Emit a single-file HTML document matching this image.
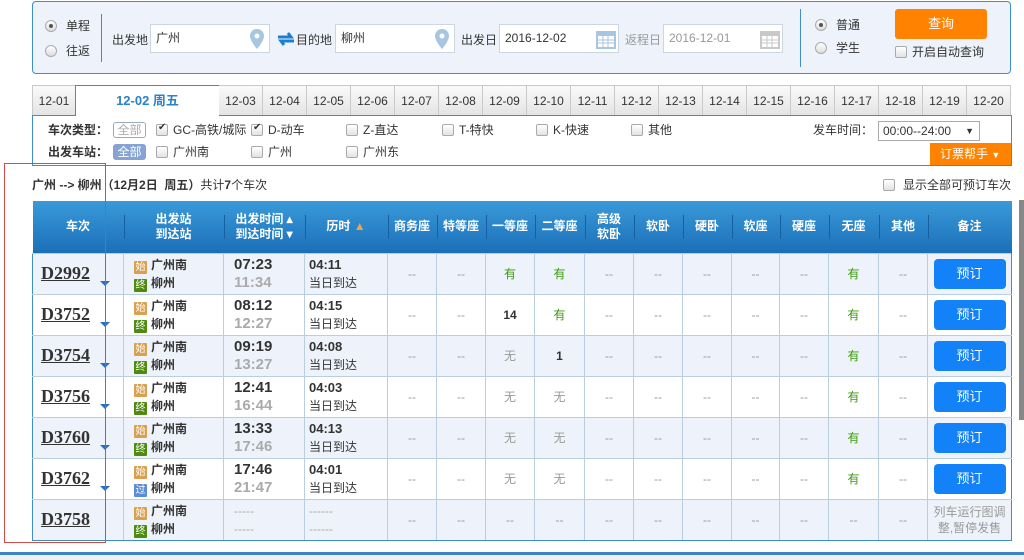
<!DOCTYPE html>
<html><head><meta charset="utf-8"><style>
*{margin:0;padding:0;box-sizing:border-box}
body{width:1024px;height:560px;overflow:hidden;background:#fff;font-family:"Liberation Sans","Noto Sans CJK SC",sans-serif;font-size:12px;color:#333;position:relative}
.a{position:absolute;white-space:nowrap}
.panel{left:32px;top:1px;width:979px;height:73px;background:#eef3fb;border:1px solid #3d8ec9;border-radius:4px}
.inp{position:absolute;height:29px;background:#fff;border:1px solid #ccd6e0;font-size:12px;line-height:27px;padding-left:5px;color:#333}
.rad{position:absolute;width:12px;height:12px;border-radius:50%;border:1px solid #aaa;background:linear-gradient(#fff,#ddd)}
.rad.on::after{content:"";position:absolute;left:3px;top:3px;width:4px;height:4px;border-radius:50%;background:#555}
.cb{position:absolute;width:12px;height:12px;border:1px solid #aaa;border-radius:2px;background:linear-gradient(#fff,#e2e2e2)}
.cb.on::after{content:"✔";position:absolute;left:1px;top:-3px;font-size:10px;color:#333}
.lbl{position:absolute;font-size:12px;line-height:16px}
.tab{position:absolute;top:85px;height:31px;width:44px;border:1px solid #c9c9c9;border-left:none;background:linear-gradient(#fafafa,#e4e4e4);font-size:12px;text-align:center;line-height:30px;color:#333}
table{position:absolute;left:32px;top:201px;border-collapse:collapse;table-layout:fixed;width:979px}
th{height:52px;background:linear-gradient(#3a9ad9,#1b6fb8);color:#fff;font-size:12px;font-weight:bold;line-height:15px;position:relative}
th+th::before{content:"";position:absolute;left:0;top:14px;height:24px;border-left:1px solid #17609f}
td{height:41px;border:1px solid #b9cfe0;text-align:center;font-size:12px;color:#999;position:relative}
tr:nth-child(even) td{background:#eef3fb}
tr:nth-child(odd) td{background:#fff}
td.n{text-align:left;padding-left:8px;border-left:1px solid #3d8ec9}
.tn{font-family:"Liberation Serif",serif;font-weight:bold;font-size:18px;color:#333;text-decoration:underline}
.tri{position:absolute;left:67px;top:27px;width:0;height:0;border-left:5px solid transparent;border-right:5px solid transparent;border-top:5px solid #2c6cc2}
td.s{text-align:left;padding-left:10px;color:#333;font-weight:bold;line-height:18px}
.ic{display:inline-block;width:13px;height:13px;font-size:10px;line-height:13px;text-align:center;color:#fff;margin-right:4px;vertical-align:-1px;font-weight:normal;border-radius:1px}
.st{background:#d9a050}.zh{background:#4f8a10}.gu{background:#5a8fd8}
td.t{text-align:left;padding-left:10px;line-height:18px}
.t1{font-weight:bold;font-size:15px;color:#333}.t2{font-weight:bold;font-size:15px;color:#aaa}
td.d{text-align:left;padding-left:4px;line-height:18px;color:#333}
.d1{font-weight:bold;font-size:13px}
.y{color:#3a9a0a}.k{color:#333;font-weight:bold}
.btn{display:block;margin:0 auto;width:72px;height:30px;background:#1382f8;border-radius:4px;color:#fff;line-height:30px;font-size:13px}
td.r{border-right:1px solid #3d8ec9}
tr:last-child td{border-bottom:1px solid #3d8ec9}
</style></head><body>

<div class="a panel"></div>
<div class="rad on" style="left:45px;top:20px"></div><div class="lbl" style="left:66px;top:18px">单程</div>
<div class="rad" style="left:45px;top:45px"></div><div class="lbl" style="left:66px;top:43px">往返</div>
<div class="a" style="left:101px;top:14px;height:48px;border-left:1px solid #3d8ec9"></div>
<div class="lbl" style="left:112px;top:32px">出发地</div>
<div class="inp" style="left:150px;top:24px;width:120px">广州</div>
<svg class="a" style="left:250px;top:29px" width="14" height="20" viewBox="0 0 14 20"><path d="M7 0C3 0 0 3 0 7c0 5 7 13 7 13s7-8 7-13C14 3 11 0 7 0z" fill="#a7c6e2"/><circle cx="7" cy="7" r="2.5" fill="#fff"/></svg>
<svg class="a" style="left:277px;top:32px" width="18" height="14" viewBox="0 0 18 14"><path d="M1 5h13l-3-4M17 9H4l3 4" stroke="#1a7fd0" stroke-width="3" fill="none"/></svg>
<div class="lbl" style="left:296px;top:32px">目的地</div>
<div class="inp" style="left:335px;top:24px;width:120px">柳州</div>
<svg class="a" style="left:435px;top:29px" width="14" height="20" viewBox="0 0 14 20"><path d="M7 0C3 0 0 3 0 7c0 5 7 13 7 13s7-8 7-13C14 3 11 0 7 0z" fill="#a7c6e2"/><circle cx="7" cy="7" r="2.5" fill="#fff"/></svg>
<div class="lbl" style="left:461px;top:32px">出发日</div>
<div class="inp" style="left:499px;top:24px;width:120px">2016-12-02</div>
<svg class="a" style="left:596px;top:29px" width="20" height="20" viewBox="0 0 20 20"><rect x="0" y="2" width="20" height="18" fill="#a7c6e2"/><rect x="2" y="7" width="16" height="11" fill="#fff"/><path d="M2 11h16M2 14h16M7 7v11M12 7v11" stroke="#a7c6e2"/></svg>
<div class="lbl" style="left:625px;top:32px;color:#999">返程日</div>
<div class="inp" style="left:663px;top:24px;width:120px;color:#999">2016-12-01</div>
<svg class="a" style="left:760px;top:29px" width="20" height="20" viewBox="0 0 20 20"><rect x="0" y="2" width="20" height="18" fill="#c8c8c8"/><rect x="2" y="7" width="16" height="11" fill="#fff"/><path d="M2 11h16M2 14h16M7 7v11M12 7v11" stroke="#c8c8c8"/></svg>
<div class="a" style="left:800px;top:9px;height:58px;border-left:1px solid #3d8ec9"></div>
<div class="rad on" style="left:815px;top:19px"></div><div class="lbl" style="left:836px;top:17px">普通</div>
<div class="rad" style="left:815px;top:42px"></div><div class="lbl" style="left:836px;top:40px">学生</div>
<div class="a" style="left:895px;top:9px;width:92px;height:30px;background:#ff8200;border-radius:3px;color:#fff;font-size:13px;text-align:center;line-height:30px">查询</div>
<div class="cb" style="left:895px;top:46px"></div><div class="lbl" style="left:912px;top:44px">开启自动查询</div>

<div class="tab" style="left:32px;width:44px;border-left:1px solid #c9c9c9">12-01</div>
<div class="a" style="left:75px;top:85px;width:145px;height:31px;background:#fff;border:1px solid #3d8ec9;border-bottom:none;color:#2a82c9;font-weight:bold;font-size:13px;text-align:center;line-height:29px">12-02 周五</div>
<div class="tab" style="left:219px">12-03</div><div class="tab" style="left:263px">12-04</div><div class="tab" style="left:307px">12-05</div><div class="tab" style="left:351px">12-06</div><div class="tab" style="left:395px">12-07</div><div class="tab" style="left:439px">12-08</div><div class="tab" style="left:483px">12-09</div><div class="tab" style="left:527px">12-10</div><div class="tab" style="left:571px">12-11</div><div class="tab" style="left:615px">12-12</div><div class="tab" style="left:659px">12-13</div><div class="tab" style="left:703px">12-14</div><div class="tab" style="left:747px">12-15</div><div class="tab" style="left:791px">12-16</div><div class="tab" style="left:835px">12-17</div><div class="tab" style="left:879px">12-18</div><div class="tab" style="left:923px">12-19</div><div class="tab" style="left:967px">12-20</div>
<div class="a" style="left:32px;top:115px;width:980px;height:51px;border:1px solid #3d8ec9;border-top:none"></div>
<div class="a" style="left:32px;top:115px;width:43px;border-top:1px solid #3d8ec9"></div>
<div class="a" style="left:219px;top:115px;width:793px;border-top:1px solid #3d8ec9"></div>

<div class="lbl" style="left:48px;top:122px;font-weight:bold">车次类型：</div>
<div class="a" style="left:113px;top:122px;width:33px;height:16px;border:1px solid #9ab;border-radius:3px;color:#aaa;font-size:12px;text-align:center;line-height:14px;background:#fff">全部</div>
<div class="cb on" style="left:156px;top:124px"></div><div class="lbl" style="left:173px;top:122px">GC-高铁/城际</div>
<div class="cb on" style="left:251px;top:124px"></div><div class="lbl" style="left:268px;top:122px">D-动车</div>
<div class="cb" style="left:346px;top:124px"></div><div class="lbl" style="left:363px;top:122px">Z-直达</div>
<div class="cb" style="left:442px;top:124px"></div><div class="lbl" style="left:459px;top:122px">T-特快</div>
<div class="cb" style="left:536px;top:124px"></div><div class="lbl" style="left:553px;top:122px">K-快速</div>
<div class="cb" style="left:631px;top:124px"></div><div class="lbl" style="left:648px;top:122px">其他</div>
<div class="lbl" style="left:813px;top:122px">发车时间：</div>
<div class="a" style="left:878px;top:121px;width:102px;height:20px;border:1px solid #aaa;background:#fff;font-size:12px;line-height:18px;padding-left:4px">00:00--24:00<span style="position:absolute;right:5px;font-size:9px">▼</span></div>
<div class="lbl" style="left:48px;top:144px;font-weight:bold">出发车站：</div>
<div class="a" style="left:113px;top:144px;width:33px;height:16px;border-radius:3px;background:#86a3d4;color:#fff;font-size:12px;text-align:center;line-height:16px">全部</div>
<div class="cb" style="left:156px;top:146px"></div><div class="lbl" style="left:173px;top:144px">广州南</div>
<div class="cb" style="left:251px;top:146px"></div><div class="lbl" style="left:268px;top:144px">广州</div>
<div class="cb" style="left:346px;top:146px"></div><div class="lbl" style="left:363px;top:144px">广州东</div>
<div class="a" style="left:930px;top:143px;width:81px;height:22px;background:#ff8200;color:#fff;font-size:12px;line-height:22px;padding-left:10px">订票帮手 <span style="font-size:9px">▼</span></div>

<div class="lbl" style="left:32px;top:177px;font-weight:bold">广州 --&gt; 柳州（12月2日 &nbsp;周五）<span style="font-weight:normal">共计<b>7</b>个车次</span></div>
<div class="cb" style="left:883px;top:179px"></div><div class="lbl" style="left:903px;top:177px">显示全部可预订车次</div>

<table>
<colgroup><col style="width:91px"><col style="width:100px"><col style="width:81px"><col style="width:83px"><col style="width:49px"><col style="width:49px"><col style="width:49px"><col style="width:50px"><col style="width:49px"><col style="width:49px"><col style="width:49px"><col style="width:48px"><col style="width:49px"><col style="width:50px"><col style="width:49px"><col style="width:84px"></colgroup>
<tr><th>车次</th><th>出发站<br>到达站</th><th>出发时间 ▴<br>到达时间 ▾</th><th>历时 <span style="color:#f0a050">▲</span></th><th>商务座</th><th>特等座</th><th>一等座</th><th>二等座</th><th>高级<br>软卧</th><th>软卧</th><th>硬卧</th><th>软座</th><th>硬座</th><th>无座</th><th>其他</th><th>备注</th></tr>
<tr><td class="n"><span class="tn">D2992</span><i class="tri"></i></td><td class="s"><span class="ic st">始</span>广州南<br><span class="ic zh">终</span>柳州</td><td class="t"><span class="t1">07:23</span><br><span class="t2">11:34</span></td><td class="d"><span class="d1">04:11</span><br>当日到达</td><td>--</td><td>--</td><td class="y">有</td><td class="y">有</td><td>--</td><td>--</td><td>--</td><td>--</td><td>--</td><td class="y">有</td><td>--</td><td class="r"><span class="btn">预订</span></td></tr>
<tr><td class="n"><span class="tn">D3752</span><i class="tri"></i></td><td class="s"><span class="ic st">始</span>广州南<br><span class="ic zh">终</span>柳州</td><td class="t"><span class="t1">08:12</span><br><span class="t2">12:27</span></td><td class="d"><span class="d1">04:15</span><br>当日到达</td><td>--</td><td>--</td><td class="k">14</td><td class="y">有</td><td>--</td><td>--</td><td>--</td><td>--</td><td>--</td><td class="y">有</td><td>--</td><td class="r"><span class="btn">预订</span></td></tr>
<tr><td class="n"><span class="tn">D3754</span><i class="tri"></i></td><td class="s"><span class="ic st">始</span>广州南<br><span class="ic zh">终</span>柳州</td><td class="t"><span class="t1">09:19</span><br><span class="t2">13:27</span></td><td class="d"><span class="d1">04:08</span><br>当日到达</td><td>--</td><td>--</td><td>无</td><td class="k">1</td><td>--</td><td>--</td><td>--</td><td>--</td><td>--</td><td class="y">有</td><td>--</td><td class="r"><span class="btn">预订</span></td></tr>
<tr><td class="n"><span class="tn">D3756</span><i class="tri"></i></td><td class="s"><span class="ic st">始</span>广州南<br><span class="ic zh">终</span>柳州</td><td class="t"><span class="t1">12:41</span><br><span class="t2">16:44</span></td><td class="d"><span class="d1">04:03</span><br>当日到达</td><td>--</td><td>--</td><td>无</td><td>无</td><td>--</td><td>--</td><td>--</td><td>--</td><td>--</td><td class="y">有</td><td>--</td><td class="r"><span class="btn">预订</span></td></tr>
<tr><td class="n"><span class="tn">D3760</span><i class="tri"></i></td><td class="s"><span class="ic st">始</span>广州南<br><span class="ic zh">终</span>柳州</td><td class="t"><span class="t1">13:33</span><br><span class="t2">17:46</span></td><td class="d"><span class="d1">04:13</span><br>当日到达</td><td>--</td><td>--</td><td>无</td><td>无</td><td>--</td><td>--</td><td>--</td><td>--</td><td>--</td><td class="y">有</td><td>--</td><td class="r"><span class="btn">预订</span></td></tr>
<tr><td class="n"><span class="tn">D3762</span><i class="tri"></i></td><td class="s"><span class="ic st">始</span>广州南<br><span class="ic gu">过</span>柳州</td><td class="t"><span class="t1">17:46</span><br><span class="t2">21:47</span></td><td class="d"><span class="d1">04:01</span><br>当日到达</td><td>--</td><td>--</td><td>无</td><td>无</td><td>--</td><td>--</td><td>--</td><td>--</td><td>--</td><td class="y">有</td><td>--</td><td class="r"><span class="btn">预订</span></td></tr>
<tr><td class="n"><span class="tn">D3758</span></td><td class="s"><span class="ic st">始</span>广州南<br><span class="ic zh">终</span>柳州</td><td class="t" style="color:#aaa">-----<br>-----</td><td class="d" style="color:#aaa">------<br>------</td><td>--</td><td>--</td><td>--</td><td>--</td><td>--</td><td>--</td><td>--</td><td>--</td><td>--</td><td>--</td><td>--</td><td class="r" style="line-height:16px;font-size:12px;color:#999">列车运行图调<br>整,暂停发售</td></tr>
</table>

<div class="a" style="left:4px;top:163px;width:102px;height:380px;border:1px solid #d94a4a"></div>
<div class="a" style="left:1019px;top:200px;width:5px;height:220px;background:#888"></div>
<div class="a" style="left:0;top:552px;width:1024px;height:3px;background:#3d84c0"></div>
<div class="a" style="left:0;top:555px;width:1024px;height:5px;background:#eef0f2"></div>
</body></html>
